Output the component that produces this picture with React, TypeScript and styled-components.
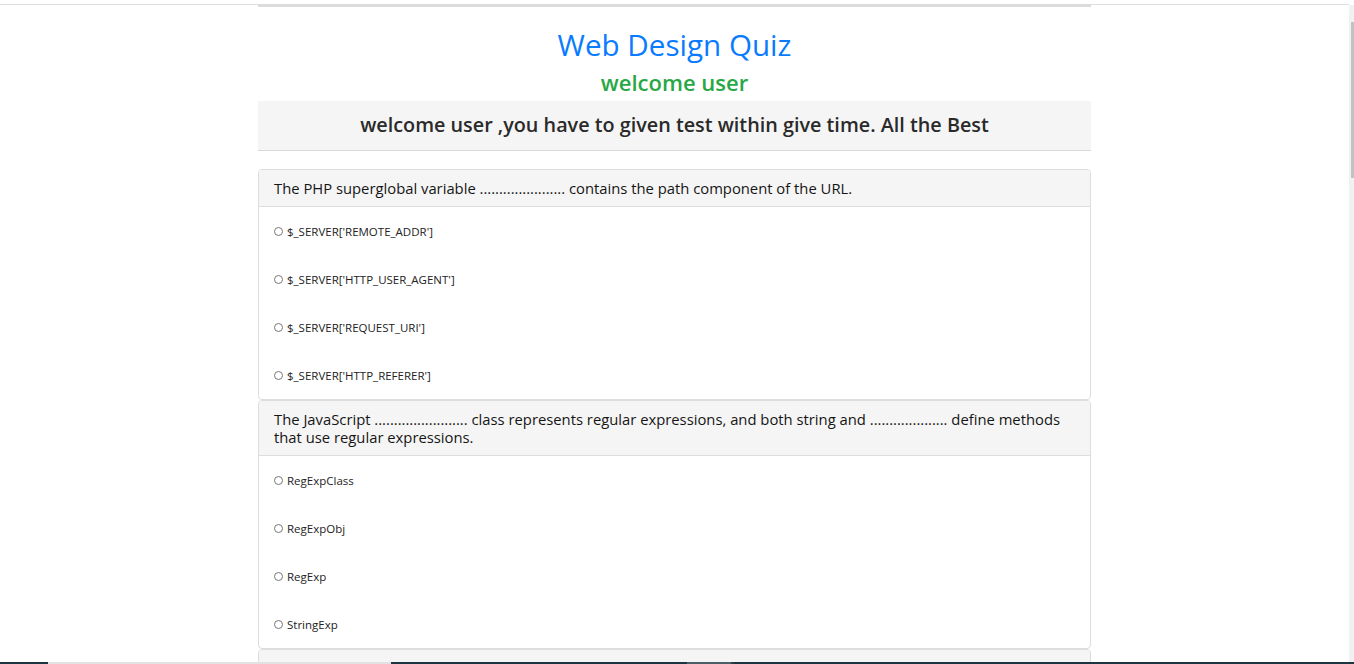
import React from "react";
import styled, { createGlobalStyle } from "styled-components";

const Global = createGlobalStyle`
  html, body { margin: 0; padding: 0; overflow: hidden; background: #fff; }
  body { font-family: "Open Sans", "Noto Sans", sans-serif; color: #222; }
  * { box-sizing: border-box; }
`;

const Page = styled.div`
  margin-right: 5px;
  padding-top: 4px;
`;

const TopRule = styled.div`
  border-top: 1px solid #dedee2;
`;

const Container = styled.div`
  width: 833px;
  margin: -1px auto 0;
  border-top: 3px solid #dcdcdc;
`;

const Title = styled.h1`
  margin: 20px 0 0;
  text-align: center;
  font-size: 29.6px;
  font-weight: 400;
  line-height: 36px;
  color: #0a7bff;
`;

const Subtitle = styled.h3`
  margin: 4px 0 0;
  text-align: center;
  font-size: 22px;
  font-weight: 600;
  line-height: 30px;
  color: #28a745;
`;

const Banner = styled.div`
  margin-top: 4px;
  height: 50px;
  padding-bottom: 3px;
  background: #f5f5f5;
  border-bottom: 1px solid #d9d9d9;
  display: flex;
  align-items: center;
  justify-content: center;
  font-size: 19.8px;
  font-weight: 600;
  color: #2a2a2a;
`;

const Questions = styled.div`
  margin-top: 18px;
  display: flex;
  flex-direction: column;
`;

const Panel = styled.div`
  border: 1px solid #ddd;
  border-radius: 4px;
  background: #fff;
  overflow: hidden;
`;

const PanelHeading = styled.div`
  background: #f5f5f5;
  border-bottom: 1px solid #ddd;
  padding: 9px 15px 9px;
  font-size: 14.8px;
  line-height: 18px;
  color: #151515;
`;

const OptionRow = styled.label`
  height: 48px;
  display: flex;
  align-items: center;
  padding-left: 15px;
  font-size: 11.5px;
  color: #222;
`;

const Radio = styled.span`
  width: 9px;
  height: 9px;
  border: 1px solid #777;
  border-radius: 50%;
  margin-right: 4px;
  flex: none;
`;

const FakeScrollbar = styled.div`
  position: fixed;
  top: 5px;
  right: 0;
  bottom: 0;
  width: 5px;
  background: #f1f1f1;
`;

const Thumb = styled.div`
  position: absolute;
  top: 17px;
  left: 2px;
  width: 3px;
  height: 156px;
  background: #c1c1c1;
`;

const Taskbar = styled.div`
  position: fixed;
  left: 0;
  right: 0;
  bottom: 0;
  height: 2px;
  display: flex;
  background: #1d3540;
`;

const TaskSeg = styled.div<{ $w: number; $c: string }>`
  width: ${(p) => p.$w}px;
  flex: none;
  background: ${(p) => p.$c};
`;

const questions = [
  {
    q: "The PHP superglobal variable ...................... contains the path component of the URL.",
    options: [
      "$_SERVER['REMOTE_ADDR']",
      "$_SERVER['HTTP_USER_AGENT']",
      "$_SERVER['REQUEST_URI']",
      "$_SERVER['HTTP_REFERER']",
    ],
  },
  {
    q: "The JavaScript ........................ class represents regular expressions, and both string and .................... define methods that use regular expressions.",
    options: ["RegExpClass", "RegExpObj", "RegExp", "StringExp"],
  },
  {
    q: "Which of the following is the correct way to connect to a MySQL database in PHP?",
    options: ["mysqli_connect()", "mysql_open()", "db_connect()", "connect_mysql()"],
  },
];

const segments = [
  { w: 48, c: "#1d3540" },
  { w: 343, c: "#e2e2e2" },
  { w: 296, c: "#1d3540" },
  { w: 44, c: "#4d5f66" },
  { w: 3, c: "#2b3e46" },
];

export default function App() {
  return (
    <>
      <Global />
      <Page>
        <TopRule />
        <Container>
          <Title>Web Design Quiz</Title>
          <Subtitle>welcome user</Subtitle>
          <Banner>welcome user ,you have to given test within give time. All the Best</Banner>
          <Questions>
            {questions.map((item, i) => (
              <Panel key={i}>
                <PanelHeading>{item.q}</PanelHeading>
                {item.options.map((o) => (
                  <OptionRow key={o}>
                    <Radio />
                    {o}
                  </OptionRow>
                ))}
              </Panel>
            ))}
          </Questions>
        </Container>
      </Page>
      <FakeScrollbar>
        <Thumb />
      </FakeScrollbar>
      <Taskbar>
        {segments.map((s, i) => (
          <TaskSeg key={i} $w={s.w} $c={s.c} />
        ))}
      </Taskbar>
    </>
  );
}
